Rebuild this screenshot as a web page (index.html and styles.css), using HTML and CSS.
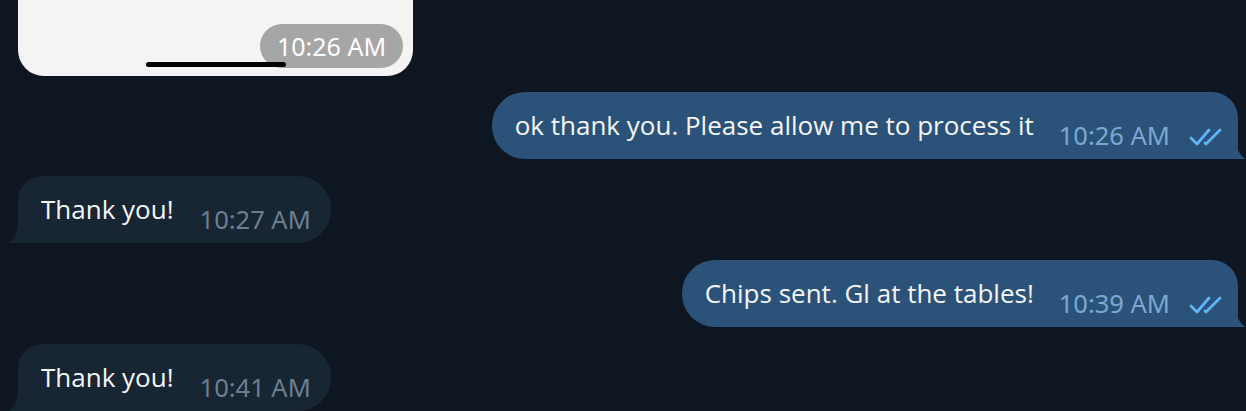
FILE: index.html
```html
<!DOCTYPE html>
<html lang="en">
<head>
    <meta charset="UTF-8">
    <meta name="viewport" content="width=device-width, initial-scale=1.0">
    <title>Chat</title>
    <link rel="stylesheet" href="styles.css">
</head>
<body>

<div class="chat">
    <!-- Photo message (cut off at the top) -->
    <div class="row in">
        <div class="photo">
            <div class="photo-time">10:26 AM</div>
            <div class="home-bar"></div>
        </div>
    </div>

    <div class="row out">
        <div class="bubble">
            <span class="text">ok thank you. Please allow me to process it</span>
            <span class="meta">10:26 AM
                <svg class="checks" width="36" height="20" viewBox="0 0 36 20"><path d="M2 11 L8 17 L20 3 M16 16 L17 17 L31 3" fill="none" stroke="#5eb5f7" stroke-width="2.8" stroke-linecap="round" stroke-linejoin="round"/></svg>
            </span>
            <svg class="tail" width="10" height="20" viewBox="0 0 10 20"><path d="M0 0 Q1 16 10 20 L0 20 Z"/></svg>
        </div>
    </div>

    <div class="row in">
        <div class="bubble">
            <span class="text">Thank you!</span>
            <span class="meta">10:27 AM</span>
            <svg class="tail" width="10" height="20" viewBox="0 0 10 20"><path d="M10 0 Q9 16 0 20 L10 20 Z"/></svg>
        </div>
    </div>

    <div class="row out">
        <div class="bubble">
            <span class="text">Chips sent. Gl at the tables!</span>
            <span class="meta">10:39 AM
                <svg class="checks" width="36" height="20" viewBox="0 0 36 20"><path d="M2 11 L8 17 L20 3 M16 16 L17 17 L31 3" fill="none" stroke="#5eb5f7" stroke-width="2.8" stroke-linecap="round" stroke-linejoin="round"/></svg>
            </span>
            <svg class="tail" width="10" height="20" viewBox="0 0 10 20"><path d="M0 0 Q1 16 10 20 L0 20 Z"/></svg>
        </div>
    </div>

    <div class="row in">
        <div class="bubble">
            <span class="text">Thank you!</span>
            <span class="meta">10:41 AM</span>
            <svg class="tail" width="10" height="20" viewBox="0 0 10 20"><path d="M10 0 Q9 16 0 20 L10 20 Z"/></svg>
        </div>
    </div>
</div>

</body>
</html>
```

FILE: styles.css
```css
body {
    margin: 0;
    background-color: #0e1621;
    font-family: "Open Sans", "Noto Sans", sans-serif;
    overflow: hidden;
}
.chat {
    display: flex;
    flex-direction: column;
    gap: 17px;
    height: 411px;
}
.row {
    display: flex;
}
.row.in {
    justify-content: flex-start;
    padding-left: 18px;
}
.row.out {
    justify-content: flex-end;
    padding-right: 8px;
}
.photo {
    position: relative;
    width: 395px;
    height: 76px;
    background-color: #f4f4f4;
    border-radius: 0 0 26px 26px;
    margin-bottom: -1px;
}
.photo-time {
    position: absolute;
    left: 242px;
    top: 24px;
    height: 44px;
    padding: 0 17px;
    border-radius: 22px;
    background-color: rgba(140, 140, 140, 0.75);
    color: #fff;
    font-family: "Noto Sans", sans-serif;
    font-size: 25px;
    line-height: 44px;
}
.home-bar {
    position: absolute;
    left: 128px;
    top: 62px;
    width: 140px;
    height: 5px;
    border-radius: 3px;
    background-color: #000;
}
.bubble {
    position: relative;
    display: flex;
    align-items: flex-start;
    height: 67px;
    box-sizing: border-box;
    padding: 16px 20px 0 23px;
}
.row.in .bubble {
    background-color: #182533;
    border-radius: 24px 33px 33px 0;
}
.row.out .bubble {
    background-color: #2b5278;
    border-radius: 33px 26px 0 33px;
    padding-right: 13px;
}
.text {
    color: #f5f5f5;
    font-size: 26px;
    line-height: 35px;
}
.meta {
    display: flex;
    align-items: center;
    margin-top: 10px;
    margin-left: 26px;
    font-family: "Noto Sans", sans-serif;
    font-size: 25.5px;
    line-height: 35px;
    color: #6d7f8f;
}
.row.out .meta {
    color: #7da8d3;
    margin-left: 25px;
}
.checks {
    margin-left: 19px;
    margin-top: 2px;
}
.tail {
    position: absolute;
    bottom: 0;
}
.row.in .tail {
    left: -10px;
    fill: #182533;
}
.row.out .tail {
    right: -8px;
    fill: #2b5278;
}
```
